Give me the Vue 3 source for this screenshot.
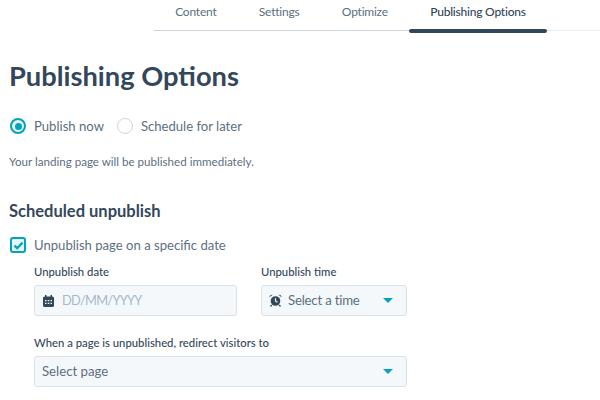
<template>
  <div class="page">
    <!-- tabs -->
    <nav class="tabs">
      <a v-for="t in tabs" :key="t" class="tab" :class="{ active: t === activeTab }">{{ t }}</a>
    </nav>

    <div class="content">
      <h1 class="title">Publishing Options</h1>

      <div class="radios">
        <label class="radio-row">
          <span class="radio on"><span class="dot"></span></span>
          Publish now
        </label>
        <label class="radio-row">
          <span class="radio"></span>
          Schedule for later
        </label>
      </div>

      <p class="info">Your landing page will be published immediately.</p>

      <h2 class="subtitle">Scheduled unpublish</h2>

      <label class="check-row">
        <span class="check">
          <svg width="11" height="9" viewBox="0 0 12 10">
            <path d="M1.500 5.200 L4.500 8 L10.500 1.800" fill="none" stroke="#00a4bd" stroke-width="2.600" />
          </svg>
        </span>
        Unpublish page on a specific date
      </label>

      <div class="fields">
        <div class="date-row">
          <div class="field date">
            <div class="label">Unpublish date</div>
            <div class="input">
              <svg class="ico" width="11" height="12" viewBox="0 0 11 12">
                <path d="M2 0h1.500v1.500h4V0H9v1.500h.5A1.500 1.500 0 0 1 11 3v7.500A1.500 1.500 0 0 1 9.500 12h-8A1.500 1.500 0 0 1 0 10.500V3a1.500 1.500 0 0 1 1.500-1.500H2z" fill="#33475b" />
                <path d="M2 5h1.500v1.300H2zM4.700 5h1.600v1.300H4.700zM7.500 5H9v1.300H7.500zM2 7.700h1.500V9H2zM4.700 7.700h1.600V9H4.700zM7.500 7.700H9V9H7.500z" fill="#f5f8fa" />
              </svg>
              <span class="placeholder">DD/MM/YYYY</span>
            </div>
          </div>
          <div class="field time">
            <div class="label">Unpublish time</div>
            <div class="input">
              <svg class="ico" width="13" height="13" viewBox="0 0 13 13">
                <circle cx="6.500" cy="7" r="4.800" fill="#33475b" />
                <path d="M6.500 4.200V7l2 1.300" fill="none" stroke="#f5f8fa" stroke-width="1.200" />
                <path d="M0.500 3.200 A2.300 2.300 0 0 1 3.600 0.800 Z M12.500 3.200 A2.300 2.300 0 0 0 9.400 0.800 Z" fill="#33475b" />
                <path d="M2.800 11l-1.300 1.500M10.200 11l1.300 1.500" stroke="#33475b" stroke-width="1.200" />
              </svg>
              <span class="value">Select a time</span>
              <span class="caret"></span>
            </div>
          </div>
        </div>

        <div class="field redirect">
          <div class="label">When a page is unpublished, redirect visitors to</div>
          <div class="input">
            <span class="value">Select page</span>
            <span class="caret"></span>
          </div>
        </div>
      </div>
    </div>
  </div>
</template>

<script setup>
const tabs = ['Content', 'Settings', 'Optimize', 'Publishing Options']
const activeTab = 'Publishing Options'
</script>

<style>
html, body { margin: 0; background: #fff; }
</style>

<style scoped>
.page {
  width: 600px;
  height: 400px;
  overflow: hidden;
  font-family: Lato, "Open Sans", sans-serif;
  color: #33475b;
}

.tabs {
  display: flex;
  margin-left: 154px;
  height: 31px;
  border-bottom: 1px solid #e8edf2;
  box-sizing: border-box;
}
.tab {
  padding: 4px 21.200px 0;
  font-size: 12px;
  letter-spacing: -0.220px;
  line-height: 16px;
  color: #5d6f80;
  position: relative;
}
.tab::after {
  content: '';
  position: absolute;
  left: 0;
  right: 0;
  bottom: -1px;
  height: 1px;
  background: #cbd6e2;
}
.tab.active {
  color: #33475b;
  font-weight: 500;
}
.tab.active::after {
  bottom: -2.500px;
  height: 4px;
  border-radius: 2px;
  background: #33475b;
}

.content { padding-left: 9px; }

.title {
  margin: 29px 0 0;
  font-size: 27.300px;
  line-height: 32px;
  font-weight: 700;
  color: #33475b;
}

.radios {
  display: flex;
  gap: 13px;
  margin-top: 24px;
  padding-left: 1px;
}
.radio-row, .check-row {
  display: flex;
  align-items: center;
  gap: 8px;
  font-size: 13.100px;
  color: #5d6f80;
  line-height: 20px;
}
.radio {
  width: 16px;
  height: 16px;
  box-sizing: border-box;
  border-radius: 50%;
  border: 1.500px solid #cbd6e2;
  background: #fff;
  display: flex;
  align-items: center;
  justify-content: center;
}
.radio.on { border: 2px solid #00a4bd; background: #e5f5f8; }
.dot { width: 7px; height: 7px; border-radius: 50%; background: #00a4bd; }

.info {
  margin: 18px 0 0;
  font-size: 11.600px;
  line-height: 16px;
  color: #5d6f80;
}

.subtitle {
  margin: 30px 0 0;
  font-size: 16.500px;
  line-height: 22px;
  font-weight: 700;
  color: #33475b;
}

.check-row { margin-top: 13px; padding-left: 1px; }
.check {
  width: 16px;
  height: 16px;
  box-sizing: border-box;
  border: 2px solid #00a4bd;
  border-radius: 3px;
  background: #e5f5f8;
  display: flex;
  align-items: center;
  justify-content: center;
}

.fields { margin-left: 25px; width: 373px; }
.date-row { display: flex; gap: 24px; margin-top: 10px; }
.date { width: 203px; }
.time { width: 146px; }
.redirect { margin-top: 20px; }

.label {
  font-size: 11.300px;
  line-height: 14px;
  font-weight: 500;
  color: #33475b;
  margin-bottom: 6px;
}
.input {
  height: 31px;
  box-sizing: border-box;
  display: flex;
  align-items: center;
  padding: 0 8px;
  background: #f5f8fa;
  border: 1px solid #d9e1ea;
  border-radius: 3px;
  font-size: 13.200px;
}
.ico { flex: none; margin-right: 8px; }
.time .ico { margin-left: -1px; margin-right: 6px; }
.time .value { letter-spacing: -0.200px; }
.placeholder { color: #a5b9cd; font-size: 12.800px; letter-spacing: -0.700px; margin-bottom: 2px; }
.redirect .value { margin-left: -1px; }
.value { color: #5d6f80; margin-bottom: 2px; }
.caret {
  margin-left: auto;
  margin-right: 5px;
  width: 0;
  height: 0;
  border-left: 5px solid transparent;
  border-right: 5px solid transparent;
  border-top: 5px solid #00a4bd;
}
</style>
